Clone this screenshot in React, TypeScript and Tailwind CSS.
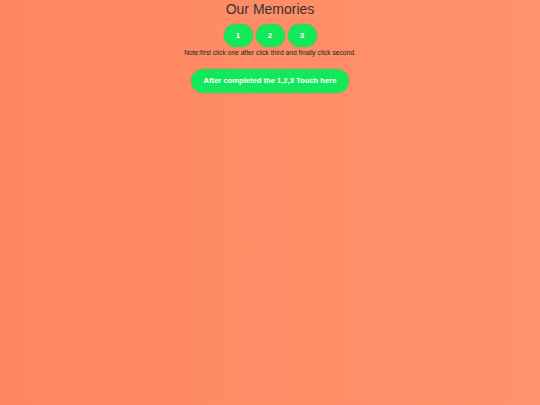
export default function App() {
  return (
    <div
      className="min-h-[405px] w-full bg-gradient-to-r from-[#ff8661] to-[#ff936b] flex flex-col items-center"
      style={{ fontFamily: '"Liberation Sans", Arial, sans-serif' }}
    >
      <h1 className="text-[14px] leading-[16px] mt-[1px] text-[#333]">Our Memories</h1>
      <div className="flex gap-[3px] mt-[7px]">
        {["1", "2", "3"].map((n) => (
          <button
            key={n}
            className="w-[29px] h-[23px] rounded-[12px] bg-[#13e85b] text-white font-bold text-[8px] shadow-[0_0_2px_rgba(0,0,0,0.15)]"
          >
            {n}
          </button>
        ))}
      </div>
      <p className="text-[6.7px] leading-[8px] mt-[2px] text-[#222]">
        Note:first click one after click third and finally click second.
      </p>
      <button className="mt-[12px] w-[158px] h-[24px] rounded-full bg-[#13e85b] text-white font-bold text-[7.6px] shadow-[0_0_2px_rgba(0,0,0,0.15)]">
        After completed the 1,2,3 Touch here
      </button>
    </div>
  );
}
